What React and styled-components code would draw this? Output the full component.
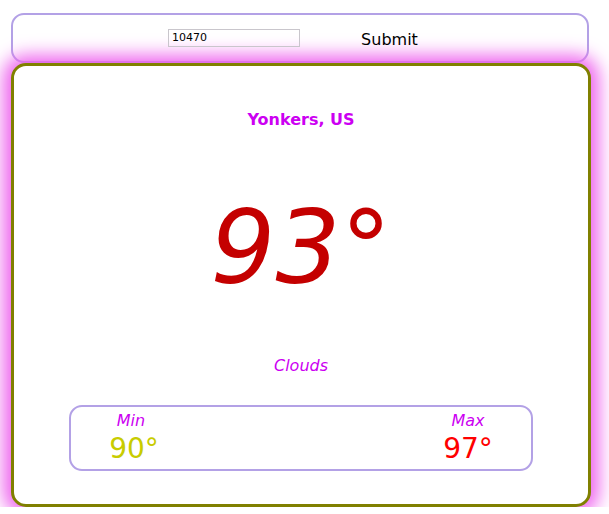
import React from "react";
import styled, { createGlobalStyle } from "styled-components";

const Global = createGlobalStyle`
  html, body { margin: 0; padding: 0; background: #ffffff; }
  body { font-family: "DejaVu Sans", Verdana, sans-serif; }
`;

const Page = styled.div`
  padding: 13px 18px 0 11px;
`;

const SearchBar = styled.form`
  display: flex;
  align-items: center;
  justify-content: center;
  gap: 61px;
  height: 46px;
  margin-right: 2px;
  border: 2px solid #b3a1e6;
  border-radius: 13px;
  background: #ffffff;
`;

const ZipInput = styled.input`
  box-sizing: border-box;
  width: 132px;
  height: 18px;
  margin: 0 0 1px;
  padding: 0 3px;
  border: 1px solid #c9c6cc;
  font-family: "DejaVu Sans", Verdana, sans-serif;
  font-size: 11px;
  color: #000;
  background: transparent;
  outline: none;
`;

const SubmitButton = styled.button`
  border: none;
  background: none;
  margin: 0;
  padding: 3px 14px 0 0;
  font-family: "DejaVu Sans", Verdana, sans-serif;
  font-size: 16px;
  line-height: 20px;
  color: #000;
  cursor: pointer;
`;

const Card = styled.section`
  display: flex;
  flex-direction: column;
  align-items: center;
  padding: 44px 0 33px;
  border: 3px solid #808000;
  border-radius: 15px;
  background: #ffffff;
  box-shadow: 0 0 18px 8px #ee66ee;
`;

const City = styled.h2`
  margin: 0;
  font-size: 16px;
  line-height: 20px;
  font-weight: bold;
  color: #cc00f2;
`;

const Temp = styled.div`
  margin-top: 57px;
  font-size: 102px;
  line-height: 122px;
  font-style: italic;
  color: #c40000;
`;

const Condition = styled.div`
  margin-top: 47px;
  font-size: 16px;
  line-height: 20px;
  font-style: italic;
  color: #cc00f2;
`;

const RangeBox = styled.div`
  box-sizing: border-box;
  width: 464px;
  margin-top: 29px;
  padding: 4px 30px 3px;
  display: flex;
  justify-content: space-between;
  border: 2px solid #b3a1e6;
  border-radius: 13px;
`;

const RangeCol = styled.div`
  width: 66px;
  display: flex;
  flex-direction: column;
  align-items: center;
`;

const RangeLabel = styled.div`
  margin-right: ${(p) => p.$shift || 0}px;
  font-size: 16px;
  line-height: 20px;
  font-style: italic;
  color: #cc00f2;
`;

const RangeValue = styled.div`
  margin-top: 1px;
  font-size: 28px;
  line-height: 34px;
  color: ${(p) => p.$color};
`;

export default function App() {
  return (
    <>
      <Global />
      <Page>
        <SearchBar onSubmit={(e) => e.preventDefault()}>
          <ZipInput defaultValue="10470" />
          <SubmitButton type="submit">Submit</SubmitButton>
        </SearchBar>
        <Card>
          <City>Yonkers, US</City>
          <Temp>93°</Temp>
          <Condition>Clouds</Condition>
          <RangeBox>
            <RangeCol>
              <RangeLabel $shift={6}>Min</RangeLabel>
              <RangeValue $color="#c8cc00">90°</RangeValue>
            </RangeCol>
            <RangeCol>
              <RangeLabel>Max</RangeLabel>
              <RangeValue $color="#ff0000">97°</RangeValue>
            </RangeCol>
          </RangeBox>
        </Card>
      </Page>
    </>
  );
}
